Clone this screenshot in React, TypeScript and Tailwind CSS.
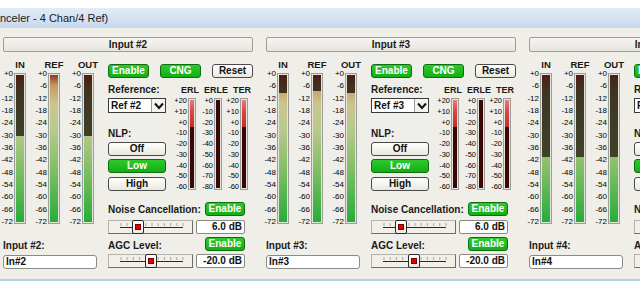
import React from "react";

const mainScale = ["+0", "-6", "-12", "-18", "-24", "-30", "-36", "-42", "-48", "-54", "-60", "-66", "-72"];
const erlScale = ["+20", "+10", "+0", "-10", "-20", "-30", "-40", "-50", "-60"];
const erleScale = ["+0", "-10", "-20", "-30", "-40", "-50", "-60", "-70", "-80"];

function MainMeter({ lit }: { lit: number }) {
  return (
    <div className="flex w-[26px]">
      <div className="flex h-[156px] w-[13px] flex-col items-end justify-between text-[8px] leading-[8px] text-[#000]">
        {mainScale.map((s) => (
          <span key={s}>{s}</span>
        ))}
      </div>
      <div className="ml-[1px] mt-[3px] h-[151px] w-[12px] border border-[#9c9c98] bg-[#e4e3dc] p-[1px]">
        <div className="relative h-full w-full bg-[linear-gradient(to_bottom,#8a3a26_0%,#c39a5e_7%,#cbc58e_20%,#b6c98c_38%,#86bf68_62%,#26ad38_100%)]">
          <div
            className="absolute left-0 right-0 top-0 bg-[linear-gradient(to_bottom,#4e1c14_0%,#42301e_8%,#3d3b26_25%,#434b2e_100%)] bg-[length:100%_147px] bg-no-repeat"
            style={{ height: `${(1 - lit) * 100}%` }}
          />
        </div>
      </div>
    </div>
  );
}

function SmallMeter({ scale, lit }: { scale: string[]; lit: number }) {
  return (
    <div className="flex w-[23px]">
      <div className="flex h-[94px] w-[14px] flex-col items-end justify-between text-[7.5px] leading-[8px] text-[#000]">
        {scale.map((s) => (
          <span key={s}>{s}</span>
        ))}
      </div>
      <div className="ml-[1px] mt-[1px] h-[92px] w-[8px] border border-[#9c9c98] bg-[#e4e3dc] p-[1px]">
        <div className="relative h-full w-full bg-[#3a0707]">
          <div
            className="absolute left-0 right-0 top-0 bg-[linear-gradient(to_bottom,#ee7a7a_0%,#d94848_40%,#c42c2c_100%)]"
            style={{ height: `${lit}px` }}
          />
        </div>
      </div>
    </div>
  );
}

function GreenBtn({ label, w }: { label: string; w: string }) {
  return (
    <div
      className={`flex h-[14px] ${w} items-center justify-center rounded-[3px] border border-[#0c6f0c] bg-[linear-gradient(to_bottom,#2fc82f,#14ad14)] text-[10px] font-bold leading-[10px] text-white`}
    >
      {label}
    </div>
  );
}

function GrayBtn({ label, w }: { label: string; w: string }) {
  return (
    <div
      className={`flex h-[14px] ${w} items-center justify-center rounded-[3px] border border-[#4a4a4a] bg-[linear-gradient(to_bottom,#ffffff,#e9e7de)] text-[10px] font-bold leading-[10px] text-[#111]`}
    >
      {label}
    </div>
  );
}

function Slider({ pos }: { pos: number }) {
  const ticks = Array.from({ length: 11 }, (_, i) => 12 + i * 6.2);
  return (
    <div className="relative h-[14px] w-[85px] border border-[#b4b2aa] border-b-[#6c6c68] border-r-[#6c6c68] bg-[#f1efe8]">
      <svg className="absolute left-0 top-0" width="83" height="12">
        {ticks.map((x, i) => (
          <line key={i} x1={x} y1="2" x2={x} y2="5" stroke="#a8a8a2" strokeWidth="1" />
        ))}
        <line x1="11" y1="6.5" x2="74" y2="6.5" stroke="#2a2a2a" strokeWidth="1" />
      </svg>
      <div
        className="absolute top-[-1px] flex h-[14px] w-[12px] items-center justify-center rounded-[2px] border border-[#2a2a2a] bg-[linear-gradient(to_bottom,#ffffff,#ecebe4)]"
        style={{ left: `${pos}px` }}
      >
        <div className="h-[6px] w-[6px] border border-[#7a0000] bg-[#e20000]" />
      </div>
    </div>
  );
}

function ValueBox({ v }: { v: string }) {
  return (
    <div className="flex h-[14px] w-[49px] items-center justify-end rounded-[2px] border border-[#8a8a86] bg-white pr-[2px] text-[10px] font-bold leading-[10px] text-[#111]">
      {v}
    </div>
  );
}

function Channel({ n, lit }: { n: number; lit: number[] }) {
  return (
    <div className="flex w-[263px] shrink-0 flex-col">
      <div className="ml-[3px] mt-[9px] flex h-[15px] w-[250px] items-center justify-center rounded-[2px] border border-[#9e9d98] bg-[linear-gradient(to_bottom,#f6f5f1,#e6e4dd)] text-[10px] font-bold leading-[10px] text-[#1a1a1a]">
        Input #{n}
      </div>
      <div className="flex">
        {/* left: level meters */}
        <div className="flex w-[108px] shrink-0 flex-col">
          <div className="mt-[8px] flex h-[9px] gap-[8px] text-[9.5px] font-bold leading-[9px] text-[#1a1a1a]">
            {["IN", "REF", "OUT"].map((l) => (
              <div key={l} className="flex w-[26px]">
                <div className="ml-[14px] flex w-[12px] justify-center whitespace-nowrap">{l}</div>
              </div>
            ))}
          </div>
          <div className="mt-[1px] flex gap-[8px]">
            <MainMeter lit={lit[0]} />
            <MainMeter lit={lit[1]} />
            <MainMeter lit={lit[2]} />
          </div>
          <div className="ml-[3px] mt-[15px] h-[10px] text-[10px] font-bold leading-[10px] text-[#1a1a1a]">Input #{n}:</div>
          <div className="ml-[3px] mt-[4px] flex h-[14px] w-[94px] items-center rounded-[3px] border border-[#8a8a86] bg-white pl-[2px] text-[10px] font-bold leading-[10px] text-[#111]">
            In#{n}
          </div>
        </div>
        {/* right: controls */}
        <div className="flex w-[147px] shrink-0 flex-col">
          <div className="mt-[12px] flex h-[14px] gap-[11px]">
            <GreenBtn label="Enable" w="w-[41px]" />
            <GreenBtn label="CNG" w="w-[41px]" />
            <GrayBtn label="Reset" w="w-[41px]" />
          </div>
          <div className="mt-[7px] flex">
            <div className="flex w-[58px] shrink-0 flex-col">
              <div className="h-[10px] whitespace-nowrap text-[10px] font-bold leading-[10px] text-[#1a1a1a]">Reference:</div>
              <div className="mt-[3px] flex h-[15px] w-[58px] items-stretch border border-[#3a3a3a] bg-white">
                <div className="flex flex-1 items-center pl-[2px] text-[10px] font-bold leading-[10px] text-[#111]">Ref #{n}</div>
                <div className="flex w-[14px] items-center justify-center border-l border-[#9a9a96] bg-[#f4f3ef]">
                  <svg width="10" height="8" viewBox="0 0 10 8">
                    <polyline points="1,1.5 5,6 9,1.5" fill="none" stroke="#111" strokeWidth="2" />
                  </svg>
                </div>
              </div>
              <div className="mt-[16px] h-[10px] text-[10px] font-bold leading-[10px] text-[#1a1a1a]">NLP:</div>
              <div className="mt-[3px]">
                <GrayBtn label="Off" w="w-[58px]" />
              </div>
              <div className="mt-[3px]">
                <GreenBtn label="Low" w="w-[58px]" />
              </div>
              <div className="mt-[4px]">
                <GrayBtn label="High" w="w-[58px]" />
              </div>
            </div>
            <div className="ml-[7px] flex flex-col">
              <div className="flex h-[10px] gap-[3px] text-[9px] font-bold leading-[10px] text-[#1a1a1a]">
                {["ERL", "ERLE", "TER"].map((l) => (
                  <div key={l} className="flex w-[23px]">
                    <div className="ml-[11px] flex w-[12px] justify-center whitespace-nowrap">{l}</div>
                  </div>
                ))}
              </div>
              <div className="mt-[2px] flex gap-[3px]">
                <SmallMeter scale={erlScale} lit={27} />
                <SmallMeter scale={erleScale} lit={0} />
                <SmallMeter scale={erlScale} lit={27} />
              </div>
            </div>
          </div>
          <div className="mt-[11px] flex h-[13px] w-[137px] items-center justify-between">
            <div className="pt-[3px] text-[10px] font-bold leading-[10px] text-[#1a1a1a]">Noise Cancellation:</div>
            <GreenBtn label="Enable" w="w-[40px]" />
          </div>
          <div className="mt-[5px] flex w-[137px] justify-between">
            <Slider pos={23} />
            <ValueBox v="6.0 dB" />
          </div>
          <div className="mt-[3px] flex h-[13px] w-[137px] items-center justify-between">
            <div className="pt-[4px] text-[10px] font-bold leading-[10px] text-[#1a1a1a]">AGC Level:</div>
            <GreenBtn label="Enable" w="w-[40px]" />
          </div>
          <div className="mt-[4px] flex w-[137px] justify-between">
            <Slider pos={36} />
            <ValueBox v="-20.0 dB" />
          </div>
        </div>
      </div>
    </div>
  );
}

export default function App() {
  return (
    <div className="h-[292px] w-[640px] overflow-hidden bg-white font-['Liberation_Sans',Arial,sans-serif]">
      <div className="h-[8px] bg-white" />
      <div className="flex h-[20px] items-center bg-[linear-gradient(to_bottom,#e2ecf8,#c7d8ed)] pl-0 text-[11px] leading-[12px] text-[#1a1a1a]">
        nceler - 4 Chan/4 Ref)
      </div>
      <div className="flex h-[253px] overflow-hidden border-b-2 border-[#a8d6e4] bg-[#efeee8]">
        <Channel n={2} lit={[0.583, 1, 0.583]} />
        <Channel n={3} lit={[0.88, 0.89, 0.88]} />
        <Channel n={4} lit={[0.444, 0.444, 0.444]} />
      </div>
    </div>
  );
}
